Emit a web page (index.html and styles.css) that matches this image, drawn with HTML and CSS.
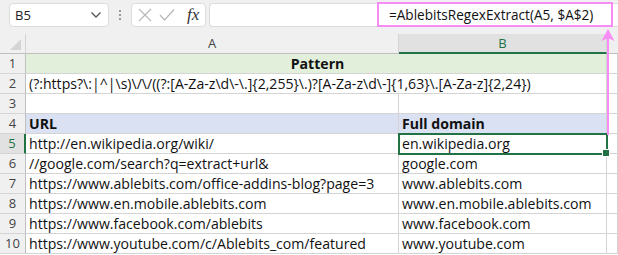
FILE: index.html
```html
<!DOCTYPE html>
<html>
<head>
<meta charset="utf-8">
<link rel="stylesheet" href="styles.css">
</head>
<body>
<div class="app">
  <div class="toolbar">
    <div class="namebox">
      <span class="ref">B5</span>
      <svg class="chev" width="12" height="8" viewBox="0 0 12 8"><path d="M1.5 1.5 L6 6 L10.5 1.5" fill="none" stroke="#555" stroke-width="1.3"/></svg>
    </div>
    <div class="dots"><i></i><i></i><i></i></div>
    <div class="fxbox">
      <svg width="14" height="14" viewBox="0 0 14 14"><path d="M1 1 L13 13 M13 1 L1 13" stroke="#b8b8b8" stroke-width="1.2" fill="none"/></svg>
      <svg width="16" height="14" viewBox="0 0 16 14"><path d="M1 7 L5.5 12 L15 1.5" stroke="#b8b8b8" stroke-width="1.2" fill="none"/></svg>
      <span class="fx">fx</span>
    </div>
    <div class="formula"><span class="hl">=AblebitsRegexExtract(A5, $A$2)</span></div>
  </div>
  <div class="sheet">
    <div class="corner"><span class="tri"></span></div>
    <div class="ch">A</div>
    <div class="ch sel">B</div>
    <div class="ch last"></div>

    <div class="rh">1</div>
    <div class="c merged green bold center">Pattern</div>
    <div class="c"></div>

    <div class="rh">2</div>
    <div class="c span2">(?:https?\:|^|\s)\/\/((?:[A-Za-z\d\-\.]{2,255}\.)?[A-Za-z\d\-]{1,63}\.[A-Za-z]{2,24})</div>
    <div class="c"></div>

    <div class="rh">3</div>
    <div class="c"></div>
    <div class="c"></div>
    <div class="c"></div>

    <div class="rh">4</div>
    <div class="c blue bold">URL</div>
    <div class="c blue bold">Full domain</div>
    <div class="c"></div>

    <div class="rh rsel">5</div>
    <div class="c">http://en.wikipedia.org/wiki/</div>
    <div class="c active">en.wikipedia.org<span class="handle"></span></div>
    <div class="c"></div>

    <div class="rh">6</div>
    <div class="c">//google.com/search?q=extract+url&amp;</div>
    <div class="c">google.com</div>
    <div class="c"></div>

    <div class="rh">7</div>
    <div class="c">https://www.ablebits.com/office-addins-blog?page=3</div>
    <div class="c">www.ablebits.com</div>
    <div class="c"></div>

    <div class="rh">8</div>
    <div class="c">https://www.en.mobile.ablebits.com</div>
    <div class="c">www.en.mobile.ablebits.com</div>
    <div class="c"></div>

    <div class="rh">9</div>
    <div class="c">https://www.facebook.com/ablebits</div>
    <div class="c">www.facebook.com</div>
    <div class="c"></div>

    <div class="rh">10</div>
    <div class="c">https://www.youtube.com/c/Ablebits_com/featured</div>
    <div class="c">www.youtube.com</div>
    <div class="c"></div>
  </div>
  <div class="arrow">
    <svg width="16" height="108" viewBox="0 0 16 108"><path d="M8 2 L14.5 14 L8 11 L1.5 14 Z" fill="#f78cf5"/><path d="M8 8 L8 108" stroke="#f78cf5" stroke-width="2"/></svg>
  </div>
</div>
</body>
</html>
```
FILE: styles.css
```css
html, body {
  margin: 0;
  padding: 0;
  background: #ffffff;
}
.app {
  position: relative;
  width: 618px;
  height: 255px;
  overflow: hidden;
  font-family: "Open Sans", "Liberation Sans", sans-serif;
}
.toolbar {
  height: 34px;
  background: #f0f0f0;
  display: flex;
  align-items: flex-start;
  padding-top: 3px;
  box-sizing: border-box;
}
.namebox {
  margin-left: 9px;
  width: 100px;
  height: 24px;
  box-sizing: border-box;
  background: #fff;
  border: 1px solid #dcdcdc;
  border-radius: 4px;
  display: flex;
  align-items: center;
  justify-content: space-between;
  padding: 0 6px 0 5px;
  font-size: 13px;
  color: #222;
}
.dots {
  width: 22px;
  height: 24px;
  display: flex;
  flex-direction: column;
  align-items: center;
  justify-content: center;
  gap: 2px;
}
.dots i {
  width: 2px;
  height: 2px;
  background: #9a9a9a;
  display: block;
}
.fxbox {
  width: 75px;
  height: 24px;
  box-sizing: border-box;
  background: #fff;
  border: 1px solid #dcdcdc;
  border-radius: 4px;
  display: flex;
  align-items: center;
  padding: 0 4px 0 6px;
  gap: 7px;
}
.fx {
  font-family: "Liberation Serif", serif;
  font-style: italic;
  font-size: 17px;
  color: #333;
  margin-left: 5px;
}
.formula {
  margin-left: 3px;
  flex: 1;
  height: 24px;
  box-sizing: border-box;
  background: #fff;
  border: 1px solid #dcdcdc;
  border-right: none;
  border-radius: 4px 0 0 4px;
  position: relative;
}
.hl {
  position: absolute;
  left: 167px;
  top: -2px;
  width: 236px;
  height: 25px;
  box-sizing: border-box;
  border: 2px solid #f78cf5;
  padding-left: 10px;
  font-size: 13.6px;
  line-height: 21px;
  color: #111;
}
.sheet {
  display: grid;
  grid-template-columns: 26px 373px 208px 1fr;
  grid-template-rows: 20px repeat(10, 20px);
}
.corner {
  background: #f0f0f0;
  border-right: 1px solid #d4d4d4;
  border-bottom: 1px solid #bfbfbf;
  box-sizing: border-box;
  position: relative;
}
.tri {
  position: absolute;
  right: 4px;
  bottom: 3px;
  width: 0;
  height: 0;
  border-left: 11px solid transparent;
  border-bottom: 11px solid #d4d4d4;
}
.ch {
  background: #f0f0f0;
  border-right: 1px solid #d4d4d4;
  border-bottom: 1px solid #bfbfbf;
  box-sizing: border-box;
  text-align: center;
  font-size: 13px;
  line-height: 19px;
  color: #444;
}
.ch.sel {
  background: #e1e1e1;
  color: #217346;
  border-bottom: 2px solid #217346;
  line-height: 18px;
}
.ch.last {
  border-right: none;
}
.rh {
  background: #f0f0f0;
  border-right: 1px solid #bfbfbf;
  border-bottom: 1px solid #d4d4d4;
  box-sizing: border-box;
  text-align: center;
  font-size: 13px;
  line-height: 19px;
  color: #444;
}
.rh.rsel {
  background: #e1e1e1;
  color: #217346;
  border-right: 2px solid #217346;
}
.c {
  border-right: 1px solid #d4d4d4;
  border-bottom: 1px solid #d4d4d4;
  box-sizing: border-box;
  font-size: 14.1px;
  line-height: 19px;
  padding-left: 3px;
  color: #111;
  white-space: nowrap;
  overflow: visible;
  position: relative;
}
.merged {
  grid-column: 2 / 4;
}
.span2 {
  grid-column: 2 / 4;
}
.green {
  background: #e2efda;
}
.blue {
  background: #d9e1f2;
}
.bold {
  font-weight: bold;
}
.center {
  text-align: center;
}
.active {
  outline: 2px solid #217346;
  outline-offset: -1px;
  z-index: 2;
}
.handle {
  position: absolute;
  right: -4px;
  bottom: -4px;
  width: 6px;
  height: 6px;
  background: #217346;
  border: 1px solid #fff;
}
.arrow {
  position: absolute;
  left: 600px;
  top: 27px;
  z-index: 5;
}
```
